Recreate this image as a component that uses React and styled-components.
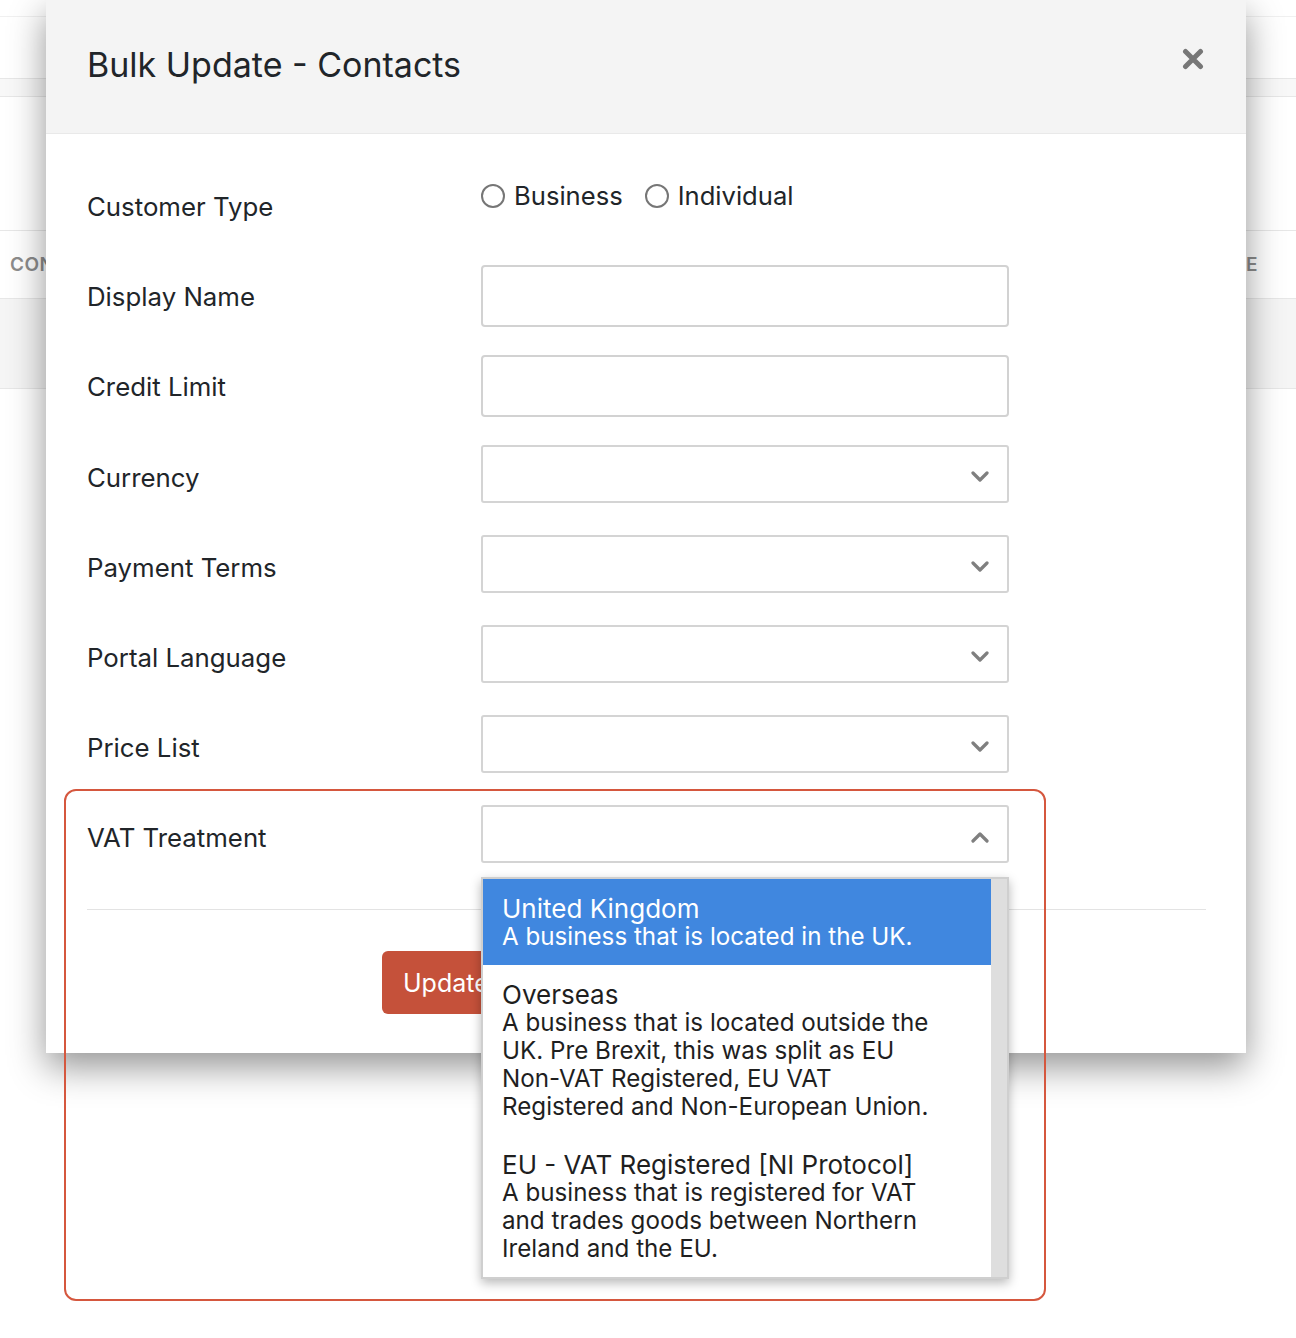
import React from "react";
import styled, { createGlobalStyle } from "styled-components";

const GlobalStyle = createGlobalStyle`
  html, body {
    margin: 0;
    padding: 0;
    background: #fff;
  }
  body {
    font-family: Inter, "Noto Sans", "Liberation Sans", sans-serif;
    color: #212529;
  }
`;

const Page = styled.div`
  position: relative;
  width: 1296px;
  height: 1338px;
  overflow: hidden;
  background: #fff;
`;

// page behind the modal
const Band = styled.div`
  height: ${(p) => p.h}px;
  background: ${(p) => p.bg || "#fff"};
  border-bottom: 1px solid ${(p) => p.line || "#e7e7e7"};
  display: flex;
  align-items: center;
  justify-content: space-between;
  padding: 0 38px 0 10px;
`;

const ColHead = styled.span`
  font-size: 19px;
  font-weight: 600;
  color: #8c8c8c;
  letter-spacing: 0.5px;
`;

const Modal = styled.div`
  position: absolute;
  left: 46px;
  top: 0;
  width: 1200px;
  background: #fff;
  box-shadow: 0 14px 34px rgba(0, 0, 0, 0.42);
`;

const Header = styled.div`
  height: 133px;
  background: #f4f4f4;
  border-bottom: 1px solid #e9e9e9;
  display: flex;
  align-items: center;
  justify-content: space-between;
  padding: 0 40px 0 41px;
`;

const Title = styled.h4`
  margin: 0 0 5px;
  font-size: 34px;
  font-weight: 400;
  color: #212529;
`;

const Close = styled.button`
  border: 0;
  background: none;
  padding: 0;
  margin: 0 2px 16px 0;
  cursor: pointer;
  display: flex;
`;

const Body = styled.div`
  padding: 27px 40px 0 41px;
`;

const Row = styled.div`
  height: 90px;
  display: grid;
  grid-template-columns: 394px 528px;
  align-items: center;
`;

const Label = styled.label`
  font-size: 25.8px;
  color: #212529;
  padding-top: ${(p) => p.offset || 0}px;
`;

const Radios = styled.div`
  align-self: start;
  margin-top: 19px;
  display: flex;
  align-items: center;
  gap: 22px;
`;

const RadioItem = styled.label`
  display: flex;
  align-items: center;
  gap: 9px;
  font-size: 25.6px;
  color: #212529;
`;

const RadioDot = styled.span`
  width: 20px;
  height: 20px;
  border-radius: 50%;
  border: 2px solid #767676;
  background: #fff;
`;

const TextInput = styled.input`
  box-sizing: border-box;
  width: 528px;
  height: 62px;
  border: 2px solid #d2d2d2;
  border-radius: 4px;
  font-size: 25px;
  font-family: inherit;
  padding: 0 18px;
  outline: none;
`;

const SelectWrap = styled.div`
  position: relative;
  margin-top: -4px;
`;

const SelectBox = styled.div`
  box-sizing: border-box;
  width: 528px;
  height: 58px;
  border: 2px solid #d4d4d4;
  border-radius: 3px;
  display: flex;
  align-items: center;
  justify-content: flex-end;
  padding: 6px 18px 0 0;
  background: #fff;
`;

const Menu = styled.div`
  position: absolute;
  left: 0;
  top: 72px;
  width: 528px;
  box-sizing: border-box;
  border: 2px solid #cfcfcf;
  background: #fff;
  box-shadow: 0 4px 10px rgba(0, 0, 0, 0.28);
  display: flex;
  z-index: 5;
`;

const Options = styled.div`
  flex: 1;
`;

const Track = styled.div`
  width: 16px;
  background: #dedede;
`;

const Option = styled.div`
  padding: 16px 20px 14px 19px;
  line-height: 28px;
  background: ${(p) => (p.active ? "#4087df" : "#fff")};
  color: ${(p) => (p.active ? "#fff" : "#1f1f1f")};
`;

const OptionName = styled.div`
  font-size: 26px;
`;

const OptionText = styled.div`
  font-size: 24.2px;
`;

const Footer = styled.div`
  margin: 28px 40px 0 41px;
  border-top: 1px solid #e3e3e3;
  padding: 41px 0 39px 295px;
  display: flex;
  gap: 12px;
`;

const Button = styled.button`
  height: 63px;
  padding: 0 21px;
  border: 0;
  border-radius: 6px;
  font-family: inherit;
  font-size: 25px;
  color: #fff;
  background: ${(p) => (p.primary ? "#c5513a" : "#f3f3f3")};
  ${(p) => !p.primary && "color: #212529; border: 1px solid #ccc;"}
`;

const Highlight = styled.div`
  position: absolute;
  left: 64px;
  top: 789px;
  width: 982px;
  height: 512px;
  box-sizing: border-box;
  border: 2px solid #d5573e;
  border-radius: 12px;
  pointer-events: none;
  z-index: 10;
`;

const Chevron = ({ up }) => (
  <svg width="18" height="12" viewBox="0 0 18 12">
    <polyline
      points={up ? "2,10 9,3 16,10" : "2,2 9,9 16,2"}
      fill="none"
      stroke="#7f7f7f"
      strokeWidth="3.2"
      strokeLinecap="round"
      strokeLinejoin="round"
    />
  </svg>
);

const CloseIcon = () => (
  <svg width="22" height="22" viewBox="0 0 22 22">
    <path
      d="M3.5 3.5 L18.5 18.5 M18.5 3.5 L3.5 18.5"
      stroke="#777"
      strokeWidth="5"
      strokeLinecap="round"
    />
  </svg>
);

const vatOptions = [
  {
    name: "United Kingdom",
    lines: ["A business that is located in the UK."],
  },
  {
    name: "Overseas",
    lines: [
      "A business that is located outside the",
      "UK. Pre Brexit, this was split as EU",
      "Non-VAT Registered, EU VAT",
      "Registered and Non-European Union.",
    ],
  },
  {
    name: "EU - VAT Registered [NI Protocol]",
    lines: [
      "A business that is registered for VAT",
      "and trades goods between Northern",
      "Ireland and the EU.",
    ],
  },
];

const selects = ["Currency", "Payment Terms", "Portal Language", "Price List"];

const App = () => {
  return (
    <Page>
      <GlobalStyle />
      <Band h={16} line="#f0f0f0" />
      <Band h={61} />
      <Band h={17} bg="#f8f8f8" />
      <Band h={133} />
      <Band h={67}>
        <ColHead>CONTACT NAME</ColHead>
        <ColHead>TYPE</ColHead>
      </Band>
      <Band h={89} bg="#f5f5f5" />

      <Modal>
        <Header>
          <Title>Bulk Update - Contacts</Title>
          <Close aria-label="Close">
            <CloseIcon />
          </Close>
        </Header>
        <Body>
          <Row>
            <Label offset={1}>Customer Type</Label>
            <Radios>
              <RadioItem>
                <RadioDot /> Business
              </RadioItem>
              <RadioItem>
                <RadioDot /> Individual
              </RadioItem>
            </Radios>
          </Row>
          <Row>
            <Label offset={1}>Display Name</Label>
            <TextInput />
          </Row>
          <Row>
            <Label offset={1}>Credit Limit</Label>
            <TextInput />
          </Row>
          {selects.map((s) => (
            <Row key={s}>
              <Label offset={2}>{s}</Label>
              <SelectWrap>
                <SelectBox>
                  <Chevron />
                </SelectBox>
              </SelectWrap>
            </Row>
          ))}
          <Row>
            <Label offset={2}>VAT Treatment</Label>
            <SelectWrap>
              <SelectBox>
                <Chevron up />
              </SelectBox>
              <Menu>
                <Options>
                  {vatOptions.map((o, i) => (
                    <Option key={o.name} active={i === 0}>
                      <OptionName>{o.name}</OptionName>
                      {o.lines.map((l) => (
                        <OptionText key={l}>{l}</OptionText>
                      ))}
                    </Option>
                  ))}
                </Options>
                <Track />
              </Menu>
            </SelectWrap>
          </Row>
        </Body>
        <Footer>
          <Button primary>Update</Button>
          <Button>Cancel</Button>
        </Footer>
      </Modal>

      <Highlight />
    </Page>
  );
};

export default App;
